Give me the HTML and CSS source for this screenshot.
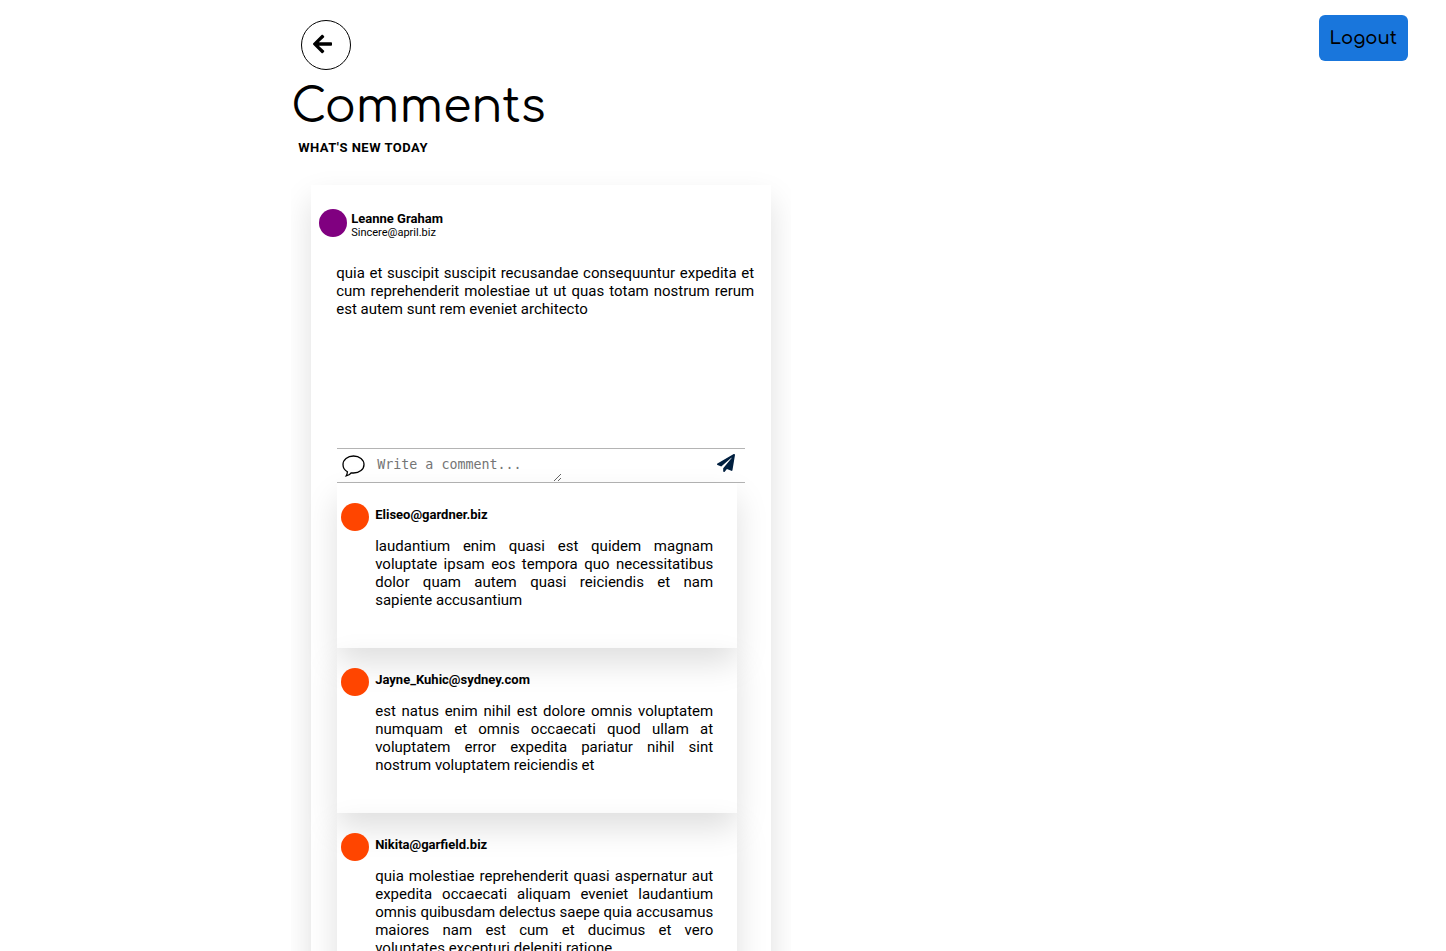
FILE: index.html
```html
<!DOCTYPE html>
<html lang="en">
<head>
<meta charset="utf-8">
<meta name="viewport" content="width=device-width, initial-scale=1">
<title>Comments</title>
<link rel="stylesheet" href="styles.css">
</head>
<body>
<div class="page">
  <main class="feed">
    <button class="back" type="button" aria-label="Back">
      <svg class="back-icon" viewBox="0 0 448 512" aria-hidden="true"><path d="M257.500 445.100l-22.200 22.200c-9.400 9.400-24.600 9.400-33.900 0L7 273c-9.400-9.400-9.400-24.600 0-33.900L201.400 44.700c9.400-9.400 24.600-9.400 33.900 0l22.200 22.200c9.500 9.500 9.300 25-.4 34.300L136.600 216H424c13.300 0 24 10.700 24 24v32c0 13.300-10.700 24-24 24H136.600l120.500 114.800c9.800 9.300 10 24.800.4 34.300z"/></svg>
    </button>
    <h1 class="title">Comments</h1>
    <p class="subtitle">WHAT'S NEW TODAY</p>
    <div class="post-clip">
      <article class="post">
        <header class="author">
          <span class="avatar avatar-author"></span>
          <div>
            <h2 class="name">Leanne Graham</h2>
            <p class="email">Sincere@april.biz</p>
          </div>
        </header>
        <p class="post-body">quia et suscipit suscipit recusandae consequuntur expedita et cum reprehenderit molestiae ut ut quas totam nostrum rerum est autem sunt rem eveniet architecto</p>
        <div class="thread">
          <form class="write">
            <svg class="bubble" viewBox="0 0 24 22" aria-hidden="true"><path d="M11.500 1C5.500 1 1 4.600 1 9.500c0 3.300 1.600 5.700 4.400 7.200-.1 1.600-.5 3.100-1.200 4.100 2.500-.4 4-1.500 5-3 .8.1 1.500.2 2.300.2 6 0 10.500-3.600 10.500-8.500S17.500 1 11.500 1z"/></svg>
            <textarea class="write-input" rows="1" placeholder="Write a comment..." aria-label="Write a comment"></textarea>
            <button class="send" type="submit" aria-label="Send">
              <svg class="send-icon" viewBox="0 0 512 512" aria-hidden="true"><path d="M476 3.200L12.500 270.600c-18.100 10.400-15.800 35.600 2.200 43.200L121 358.400l287.300-253.200c5.500-4.900 13.300 2.600 8.600 8.300L176 407v80.500c0 23.600 28.500 32.900 42.500 15.800L282 426l124.600 52.200c14.200 6 30.400-2.900 33-18.200l72-432C515 7.800 493.300-6.800 476 3.200z"/></svg>
            </button>
          </form>
          <section class="comment">
            <span class="avatar"></span>
            <div class="comment-text">
              <h3 class="name">Eliseo@gardner.biz</h3>
              <p class="comment-body">laudantium enim quasi est quidem magnam voluptate ipsam eos tempora quo necessitatibus dolor quam autem quasi reiciendis et nam sapiente accusantium</p>
            </div>
          </section>
          <section class="comment">
            <span class="avatar"></span>
            <div class="comment-text">
              <h3 class="name">Jayne_Kuhic@sydney.com</h3>
              <p class="comment-body">est natus enim nihil est dolore omnis voluptatem numquam et omnis occaecati quod ullam at voluptatem error expedita pariatur nihil sint nostrum voluptatem reiciendis et</p>
            </div>
          </section>
          <section class="comment">
            <span class="avatar"></span>
            <div class="comment-text">
              <h3 class="name">Nikita@garfield.biz</h3>
              <p class="comment-body">quia molestiae reprehenderit quasi aspernatur aut expedita occaecati aliquam eveniet laudantium omnis quibusdam delectus saepe quia accusamus maiores nam est cum et ducimus et vero voluptates excepturi deleniti ratione</p>
            </div>
          </section>
        </div>
      </article>
    </div>
  </main>
  <button class="logout" type="button">Logout</button>
</div>
</body>
</html>
```
FILE: styles.css
```css
* {
  box-sizing: border-box;
  margin: 0;
}

html {
  scrollbar-width: none;
}

body {
  background: #fff;
  color: #000;
  font-family: Roboto, sans-serif;
}

.page {
  display: flex;
  justify-content: space-between;
  align-items: flex-start;
  padding: 15px 38px 0 calc(20% + 2px);
}

.feed {
  flex: 0 1 500px;
  padding-top: 5px;
}

.back {
  display: flex;
  align-items: center;
  width: 50px;
  height: 50px;
  margin-left: 10px;
  padding: 0 0 2px 11px;
  border: 1px solid #000;
  border-radius: 50%;
  background: none;
}

.back-icon {
  width: 19px;
  height: 22px;
}

.title {
  padding-top: 5px;
  font-family: Comfortaa, Lato, sans-serif;
  font-size: 46px;
  font-weight: 400;
  line-height: 64px;
}

.subtitle {
  padding-left: 7px;
  font-size: 13px;
  font-weight: 700;
  line-height: 18px;
  letter-spacing: 0.5px;
}

.post-clip {
  overflow: hidden;
  padding: 28px 20px 0;
}

.post {
  padding: 24px 8px 40px;
  box-shadow: 0 15px 30px rgba(0, 0, 0, 0.13);
}

.author {
  display: flex;
  gap: 4px;
}

.avatar {
  flex: none;
  width: 28px;
  height: 28px;
  border-radius: 50%;
  background: orangered;
}

.avatar-author {
  background: purple;
}

.name {
  font-size: 13px;
  font-weight: 700;
  line-height: 15px;
}

.author .name {
  padding-top: 2px;
}

.email {
  font-size: 11px;
  line-height: 13px;
}

.post-body,
.comment-body {
  font-size: 15px;
  line-height: 18px;
  text-align: justify;
}

.post-body {
  min-height: 209px;
  padding: 25px 9px 0 17px;
}

.thread {
  padding: 0 18px;
}

.write {
  display: flex;
  align-items: flex-start;
  height: 35px;
  border-top: 1px solid #b4b4b4;
  border-bottom: 1px solid #b4b4b4;
}

.bubble {
  width: 24px;
  height: 22px;
  margin: 6px 8px 0 5px;
  fill: none;
  stroke: #000;
  stroke-width: 1.3;
}

.write-input {
  width: 188px;
  height: 33px;
  padding: 8px 3px;
  border: 0;
  outline: 0;
  overflow: hidden;
  background: none;
  font-family: monospace;
  line-height: 16px;
  resize: both;
}

.send {
  margin: 5px 10px 0 auto;
  padding: 0;
  border: 0;
  background: none;
}

.send-icon {
  display: block;
  width: 18px;
  height: 18px;
  fill: #001f3f;
}

.comment {
  display: flex;
  gap: 6px;
  min-height: 165px;
  margin-right: 8px;
  padding: 20px 24px 38px 4px;
  box-shadow: 0 15px 30px rgba(0, 0, 0, 0.13);
}

.comment-text {
  flex: 1;
  padding-top: 4px;
}

.comment-body {
  padding-top: 15px;
}

.logout {
  padding: 10px 11px;
  border: 0;
  border-radius: 6px;
  background: #1976dc;
  color: #000;
  font-family: Comfortaa, Lato, sans-serif;
  font-size: 18px;
  font-weight: 600;
  line-height: 26px;
}
```
